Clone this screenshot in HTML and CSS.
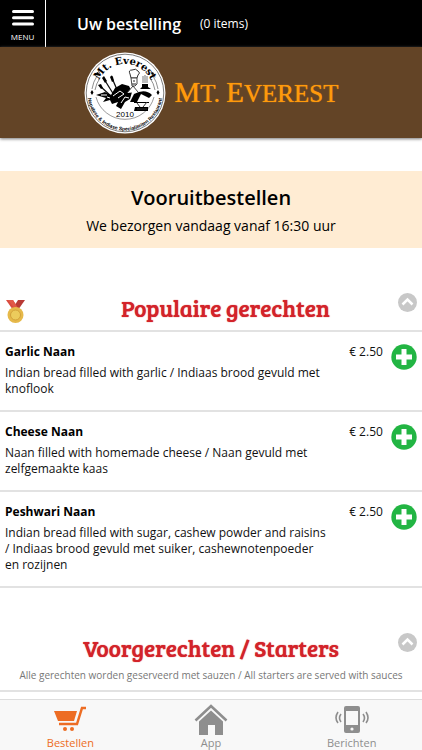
FILE: index.html
```html
<!DOCTYPE html>
<html lang="nl">
<head>
    <meta charset="utf-8">
    <meta name="viewport" content="width=device-width, initial-scale=1">
    <title>Mt. Everest</title>
    <link rel="stylesheet" href="styles.css">
</head>
<body>
    <header class="topbar">
        <button class="menu-button" type="button">
            <svg width="22" height="16" viewBox="0 0 22 16"><path d="M1.5 1.6h19M1.5 7.8h19M1.5 14h19" stroke="#fff" stroke-width="3" stroke-linecap="round"/></svg>
            MENU
        </button>
        <a class="order" href="#">Uw bestelling <span class="count">(0 items)</span></a>
    </header>

    <div class="banner">
        <svg class="logo" width="82" height="82" viewBox="0 0 82 82">
            <defs>
                <path id="arc-top" d="M12 41a29 29 0 0 1 58 0"/>
                <path id="arc-bottom" d="M3.500 41a37.500 37.500 0 0 0 75 0"/>
            </defs>
            <circle cx="41" cy="41" r="40.500" fill="#fff"/>
            <circle cx="41" cy="41" r="38.800" fill="none" stroke="#444" stroke-width=".7"/>
            <path d="M8 37a33 33 0 0 1 5-13M74 37a33 33 0 0 0-5-13M11 38a30 30 0 0 1 5-12M71 38a30 30 0 0 0-5-12" fill="none" stroke="#444" stroke-width=".6"/>
            <path d="M12 45a30 30 0 0 0 58 0" fill="none" stroke="#555" stroke-width=".6"/>
            <path d="M8 38l1.500 2.500L8 43l-1.500-2.500zM74 38l1.500 2.500L74 43l-1.500-2.500zM13 20l2 1-1 2-2-1zM69 20l-2 1 1 2 2-1z"/>
            <text class="logo-top"><textPath href="#arc-top" startOffset="50%">Mt. Everest</textPath></text>
            <text class="logo-bottom"><textPath href="#arc-bottom" startOffset="50%">Nepalese &amp; Indiase Specialiteiten Restaurant</textPath></text>
            <!-- cutlery -->
            <path d="M16 34l12 11M20 27l10 16M28 26l6 14" stroke="#111" stroke-width="1.300"/>
            <path d="M14 33l3-1 2 4-2 1zM18 26l2-2 3 5-2 2zM26 25q2-3 3 0l1 4-2 1z"/>
            <!-- tandoori dish -->
            <path d="M12 43l9-3 6 3 4-7 7-4 7 2 3 6-2 7-5 3-4 7-5-3 2-4-6 2-2-4-7 2 3-4z"/>
            <path d="M17 43l6 0M29 44l7-5 4 3-6 4M37 51l4-6 4 1M23 45l3 1" stroke="#fff" stroke-width="1" fill="none"/>
            <!-- chef -->
            <path d="M46 22q-2-4 2-4 4-2 6 1 3 2 0 4l-1 3h-6z" fill="#fff" stroke="#333"/>
            <path d="M47 26h6v6l-2 2h-3zM43 41l6-7 5 6" fill="#fff" stroke="#333" stroke-width=".9"/>
            <path d="M49 29h2M48 32h4" stroke="#222"/>
            <!-- steaming bowls -->
            <path d="M59 24v7M61 23v8M63 24v7" stroke="#555" stroke-width=".8"/>
            <path d="M58 32h6v3l3 2H56l2-2zM50 42q11-6 18 1l-3 3-8-4-4 8h-7zM50 50h15v1H50zM51 55h13v4H50zM55 51l2 3M62 51l-2 3"/>
            <path d="M53 51l3 4M63 50l-4 5M53 57h10" stroke="#333" stroke-width="1"/>
            <text class="logo-year" x="41" y="65">2010</text>
        </svg>
        <h1 class="brand"><span class="cap">M</span>T. <span class="cap">E</span>VEREST</h1>
    </div>

    <main>
        <section class="notice">
            <h2>Vooruitbestellen</h2>
            <p>We bezorgen vandaag vanaf 16:30 uur</p>
        </section>

        <section class="category">
            <div class="category-head with-medal">
                <svg class="medal" width="20" height="24" viewBox="0 0 20 24">
                    <path d="M0 0h7l5 8-5 2z" fill="#d94b3f"/>
                    <path d="M19 0h-7L7 8l5 2z" fill="#b83a35"/>
                    <path d="M2 0h5l5 8-3 1z" fill="#e15848"/>
                    <circle cx="9.500" cy="15" r="8" fill="#e6b94a"/>
                    <circle cx="9.500" cy="15" r="5" fill="#eccb5c" stroke="#d3a13a"/>
                </svg>
                <h2>Populaire gerechten</h2>
                <button class="toggle" type="button" aria-label="Inklappen">
                    <svg width="19" height="19" viewBox="0 0 19 19"><circle cx="9.500" cy="9.500" r="9.500" fill="#c8c8c8"/><path d="M4.500 11.500l5-5 5 5" fill="none" stroke="#fff" stroke-width="2.500"/></svg>
                </button>
            </div>

            <article class="dish">
                <div class="dish-text">
                    <h3>Garlic Naan</h3>
                    <p>Indian bread filled with garlic / Indiaas brood gevuld met knoflook</p>
                </div>
                <span class="price">€ 2.50</span>
                <button class="add" type="button" aria-label="Garlic Naan toevoegen">
                    <svg width="26" height="26" viewBox="0 0 26 26"><circle cx="13" cy="13" r="12.700" fill="#22b543"/><path d="M13 5v16M5 13h16" stroke="#fff" stroke-width="5"/></svg>
                </button>
            </article>
            <article class="dish">
                <div class="dish-text">
                    <h3>Cheese Naan</h3>
                    <p>Naan filled with homemade cheese / Naan gevuld met zelfgemaakte kaas</p>
                </div>
                <span class="price">€ 2.50</span>
                <button class="add" type="button" aria-label="Cheese Naan toevoegen">
                    <svg width="26" height="26" viewBox="0 0 26 26"><circle cx="13" cy="13" r="12.700" fill="#22b543"/><path d="M13 5v16M5 13h16" stroke="#fff" stroke-width="5"/></svg>
                </button>
            </article>
            <article class="dish">
                <div class="dish-text">
                    <h3>Peshwari Naan</h3>
                    <p>Indian bread filled with sugar, cashew powder and raisins / Indiaas brood gevuld met suiker, cashewnotenpoeder en rozijnen</p>
                </div>
                <span class="price">€ 2.50</span>
                <button class="add" type="button" aria-label="Peshwari Naan toevoegen">
                    <svg width="26" height="26" viewBox="0 0 26 26"><circle cx="13" cy="13" r="12.700" fill="#22b543"/><path d="M13 5v16M5 13h16" stroke="#fff" stroke-width="5"/></svg>
                </button>
            </article>
        </section>

        <section class="category">
            <div class="category-head">
                <h2>Voorgerechten / Starters</h2>
                <button class="toggle" type="button" aria-label="Inklappen">
                    <svg width="19" height="19" viewBox="0 0 19 19"><circle cx="9.500" cy="9.500" r="9.500" fill="#c8c8c8"/><path d="M4.500 11.500l5-5 5 5" fill="none" stroke="#fff" stroke-width="2.500"/></svg>
                </button>
                <p class="remark">Alle gerechten worden geserveerd met sauzen / All starters are served with sauces</p>
            </div>
        </section>
    </main>

    <nav class="tabs">
        <a class="tab active" href="#">
            <svg width="34" height="32" viewBox="0 0 34 32" fill="currentColor">
                <path d="M1 7h23l-3 10H5z"/>
                <path d="M33 4h-4l-5 16H6" fill="none" stroke="currentColor" stroke-width="2.500"/>
                <circle cx="12" cy="25" r="2"/><circle cx="19" cy="25" r="2"/>
            </svg>
            Bestellen
        </a>
        <a class="tab" href="#">
            <svg width="34" height="32" viewBox="0 0 34 32" fill="currentColor">
                <path d="M1.500 16.500L17 2l15.500 14.500" fill="none" stroke="currentColor" stroke-width="2.600"/>
                <path d="M17 6.500l12 11V31h-8V21h-7v10H5V17.500z"/>
            </svg>
            App
        </a>
        <a class="tab" href="#">
            <svg width="34" height="32" viewBox="0 0 34 32">
                <path d="M11 2h12q2 0 2 2v23q0 2-2 2H11q-2 0-2-2V4q0-2 2-2zM11 7v14h12V7z" fill="currentColor" fill-rule="evenodd"/>
                <circle cx="17" cy="25" r="1.600" fill="#f8f8f8"/>
                <path d="M6 10q-3 4 0 8M3 8q-4 6 0 11M28 10q3 4 0 8M31 8q4 6 0 11" fill="none" stroke="currentColor" stroke-width="1.600"/>
            </svg>
            Berichten
        </a>
    </nav>
</body>
</html>
```
FILE: styles.css
```css
* {
    box-sizing: border-box;
}

body {
    margin: 0;
    min-height: 100vh;
    display: flex;
    flex-direction: column;
    background-color: #fff;
    color: #111;
    font-family: "Open Sans", sans-serif;
    font-size: 12px;
    line-height: 16px;
}

h1, h2, h3, p {
    margin: 0;
}

a {
    text-decoration: none;
}

button {
    padding: 0;
    border: 0;
    background: none;
    font-family: inherit;
    cursor: pointer;
}

svg {
    display: block;
}

/* black bar */
.topbar {
    display: flex;
    height: 47px;
    background-color: #000;
}

.menu-button {
    width: 46px;
    display: flex;
    flex-direction: column;
    align-items: center;
    gap: 5px;
    padding-top: 10px;
    border-right: 1px solid #fff;
    color: #fff;
    font-size: 8px;
    line-height: 12px;
}

.order {
    display: flex;
    align-items: center;
    gap: 19px;
    padding-left: 31px;
    color: #fff;
    font-size: 16px;
    font-weight: 600;
}

.count {
    font-size: 12px;
    font-weight: 400;
}

/* restaurant banner */
.banner {
    display: flex;
    justify-content: center;
    align-items: center;
    gap: 9px;
    height: 91px;
    background-color: #634426;
    box-shadow: 0 1px 3px #777;
}

.logo text {
    text-anchor: middle;
}

.logo-top {
    font: bold 10px "DejaVu Serif", serif;
}

.logo-bottom {
    font: bold 5px "Liberation Sans", sans-serif;
}

.logo-year {
    font: 8px "Liberation Sans", sans-serif;
}

.brand {
    color: #ff9a0c;
    font-family: "Liberation Serif", serif;
    font-size: 25px;
    font-weight: normal;
    line-height: 32px;
    text-shadow: 0 0 1px #ff9a0c;
}

.cap {
    font-size: 29px;
}

.notice {
    margin-top: 33px;
    padding: 13px 5px;
    background-color: #ffecd3;
    color: #000;
    text-align: center;
}

.notice h2 {
    font-size: 20px;
    font-weight: 600;
    line-height: 28px;
}

.notice p {
    margin-top: 4px;
    font-size: 14px;
    line-height: 19px;
}

/* dishes */
.category {
    padding-top: 45px;
}

.category-head {
    position: relative;
    padding-bottom: 7px;
    border-bottom: 2px solid #e2e2e2;
    text-align: center;
}

.with-medal {
    padding-left: 29px;
}

.category-head h2 {
    color: #d3232a;
    font-family: "Bree Serif", "DejaVu Serif", serif;
    font-size: 23px;
    font-weight: normal;
    line-height: 30px;
    text-shadow: 0 0 1px #d3232a;
}

.medal {
    position: absolute;
    left: 6px;
    bottom: 6px;
}

.toggle {
    position: absolute;
    top: 0;
    right: 5px;
}

.remark {
    margin-top: 4px;
    color: #777;
    font-size: 10px;
}

.dish {
    display: flex;
    align-items: flex-start;
    padding: 12px 5px 13px;
    border-bottom: 2px solid #e2e2e2;
}

.dish-text {
    flex: 1;
    padding-right: 12px;
}

.dish h3 {
    color: #000;
    font-size: 12px;
    line-height: 16px;
}

.dish p {
    margin-top: 5px;
}

.price {
    width: 50px;
    text-align: center;
}

/* bottom tabs */
.tabs {
    display: flex;
    margin-top: auto;
    border-top: 1px solid #ddd;
    background-color: #f8f8f8;
}

.tab {
    flex: 1;
    display: flex;
    flex-direction: column;
    align-items: center;
    padding: 4px 0 0;
    color: #8e8e8e;
    font-size: 11px;
    line-height: 14px;
}

.active {
    color: #ed6d24;
}
```
